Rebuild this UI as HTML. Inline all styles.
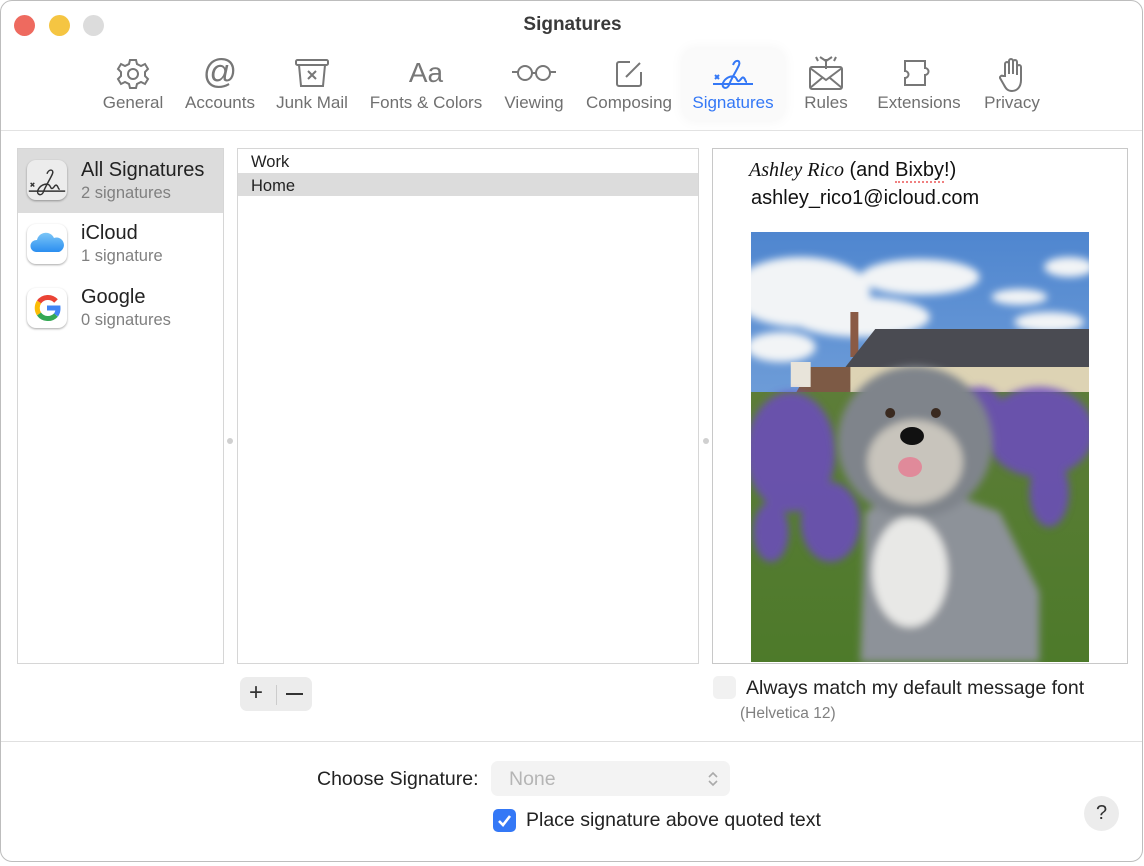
<!DOCTYPE html>
<html><head><meta charset="utf-8"><style>
*{margin:0;padding:0;box-sizing:border-box}
body{width:1144px;height:866px;background:#fff;font-family:"Liberation Sans",sans-serif;position:relative;overflow:hidden;color:#222}
.win{position:absolute;left:0;top:0;width:1143px;height:862px;border:1px solid #bdbdbd;border-radius:12px;background:#fff}
.a{position:absolute}
.dot{position:absolute;top:14px;width:21px;height:21px;border-radius:50%}
.tb{position:absolute;top:92px;font-size:17px;color:#707070;transform:translateX(-50%);white-space:nowrap}
.ic{position:absolute;top:56px;transform:translateX(-50%)}
.panel{position:absolute;border:1px solid #d6d6d6;background:#fff}
.t1{font-size:20px;color:#222}
.t2{font-size:16.5px;color:#808080}
.appic{position:absolute;left:9px;width:40px;height:40px;border-radius:9px;background:#fff;box-shadow:0 1px 2px rgba(0,0,0,.35)}
</style></head><body>
<div class="win">
<div class="dot" style="left:13px;background:#ee6a5f"></div>
<div class="dot" style="left:48px;background:#f5c542"></div>
<div class="dot" style="left:82px;background:#dcdcdc"></div>
<div class="a" style="left:0;width:1143px;top:13px;text-align:center;font-weight:bold;font-size:19px;color:#3a3a3a">Signatures</div>

<div class="a" style="left:682px;top:48px;width:101px;height:71px;background:#fafafa;border-radius:10px;box-shadow:0 0 14px rgba(0,0,0,.05)"></div>

<svg class="ic" style="left:132px" width="34" height="34" viewBox="0 0 34 34" fill="none" stroke="#777" stroke-width="2"><path d="M14 3h6l1 4 4 2 4-2 3 5-3 3v4l3 3-3 5-4-2-4 2-1 4h-6l-1-4-4-2-4 2-3-5 3-3v-4l-3-3 3-5 4 2 4-2z"/><circle cx="17" cy="17" r="5"/></svg>
<div class="ic" style="left:219px;top:52px;font-size:34px;color:#777">@</div>
<svg class="ic" style="left:311px" width="36" height="32" viewBox="0 0 36 32" fill="none" stroke="#777" stroke-width="2"><rect x="2" y="3" width="32" height="5" rx="1.5"/><path d="M5 8l2 21h22l2-21"/><path d="M14 14l8 8M22 14l-8 8"/></svg>
<div class="ic" style="left:425px;top:56px;font-size:28px;color:#777">Aa</div>
<svg class="ic" style="left:533px;top:62px" width="46" height="20" viewBox="0 0 46 20" fill="none" stroke="#777" stroke-width="2"><circle cx="14" cy="10" r="7"/><circle cx="32" cy="10" r="7"/><path d="M21 10h4M1 9h6M39 9h6"/></svg>
<svg class="ic" style="left:628px" width="32" height="32" viewBox="0 0 32 32" fill="none" stroke="#777" stroke-width="2"><path d="M17 5H6a2 2 0 0 0-2 2v20a2 2 0 0 0 2 2h20a2 2 0 0 0 2-2V15"/><path d="M13 20l14-14"/></svg>
<svg class="ic" style="left:732px" width="44" height="34" viewBox="0 0 44 34" fill="none" stroke="#3478f6" stroke-width="2"><path d="M4 18l4 4M8 18l-4 4"/><path d="M2 27h40"/><path d="M22 8c2-6 8-5 6 0s-8 14-10 20c-2 5-8 3-6-2s8-8 12-6c2 1 2 5 4 4s3-5 5-3 1 4 3 4"/></svg>
<svg class="ic" style="left:825px;top:54px" width="36" height="36" viewBox="0 0 36 36" fill="none" stroke="#777" stroke-width="2"><rect x="2" y="12" width="32" height="22" rx="2"/><path d="M2 13l16 12 16-12M2 33l12-10M34 33l-12-10"/><path d="M18 14V4M12 2l6 4 6-4M10 6l-2-4M26 6l2-4"/></svg>
<svg class="ic" style="left:918px" width="36" height="32" viewBox="0 0 36 32" fill="none" stroke="#777" stroke-width="2"><path d="M4 4h20v7a3 3 0 1 1 0 7v10H4v-7a3 3 0 1 0 0-7z"/></svg>
<svg class="ic" style="left:1011px;top:55px" width="28" height="36" viewBox="0 0 28 36" fill="none" stroke="#777" stroke-width="2"><path d="M7 20V8a2 2 0 0 1 4 0v10V5a2 2 0 0 1 4 0v13V6a2 2 0 0 1 4 0v13-8a2 2 0 0 1 4 0v13c0 7-4 11-9 11-4 0-6-2-8-6l-4-7a2 2 0 0 1 3-2z"/></svg>

<div class="tb" style="left:132px">General</div>
<div class="tb" style="left:219px">Accounts</div>
<div class="tb" style="left:311px">Junk Mail</div>
<div class="tb" style="left:425px">Fonts &amp; Colors</div>
<div class="tb" style="left:533px">Viewing</div>
<div class="tb" style="left:628px">Composing</div>
<div class="tb" style="left:732px;color:#3478f6">Signatures</div>
<div class="tb" style="left:825px">Rules</div>
<div class="tb" style="left:918px">Extensions</div>
<div class="tb" style="left:1011px">Privacy</div>
<div class="a" style="left:0;top:129px;width:1141px;height:1px;background:#e2e2e2"></div>

<div class="panel" style="left:16px;top:147px;width:207px;height:516px">
 <div class="a" style="left:0;top:0;width:205px;height:64px;background:#dcdcdc"></div>
 <div class="appic" style="top:11px;background:#ececec"><svg width="40" height="40" viewBox="0 0 44 34" style="margin-top:2px"><g fill="none" stroke="#333" stroke-width="1.6"><path d="M4 18l4 4M8 18l-4 4"/><path d="M2 27h40"/><path d="M22 8c2-6 8-5 6 0s-8 14-10 20c-2 5-8 3-6-2s8-8 12-6c2 1 2 5 4 4s3-5 5-3 1 4 3 4"/></g></svg></div>
 <div class="a t1" style="left:63px;top:10px">All Signatures</div>
 <div class="a t2" style="left:63px;top:35px">2 signatures</div>
 <div class="appic" style="top:75px"><svg width="40" height="40" viewBox="0 0 40 40"><defs><linearGradient id="cl" x1="0" y1="0" x2="0" y2="1"><stop offset="0" stop-color="#7cc6f7"/><stop offset="1" stop-color="#2b8ef0"/></linearGradient></defs><path d="M9 28a6 6 0 0 1 1-12 9 9 0 0 1 17-2 7 7 0 0 1 5 14z" fill="url(#cl)"/></svg></div>
 <div class="a t1" style="left:63px;top:73px">iCloud</div>
 <div class="a t2" style="left:63px;top:98px">1 signature</div>
 <div class="appic" style="top:139px"><svg width="40" height="40" viewBox="0 0 40 40"><g fill="none" stroke-width="5"><path d="M29 13a11 11 0 0 0-17 1" stroke="#ea4335"/><path d="M12 14a11 11 0 0 0 0 12" stroke="#fbbc05"/><path d="M12 26a11 11 0 0 0 17 1" stroke="#34a853"/><path d="M29 27a11 11 0 0 0 2-7H20" stroke="#4285f4"/></g></svg></div>
 <div class="a t1" style="left:63px;top:137px">Google</div>
 <div class="a t2" style="left:63px;top:162px">0 signatures</div>
</div>
<div class="a" style="left:226px;top:437px;width:6px;height:6px;border-radius:50%;background:#d0d0d0"></div>

<div class="panel" style="left:236px;top:147px;width:462px;height:516px">
 <div class="a" style="left:13px;top:4px;font-size:16.5px">Work</div>
 <div class="a" style="left:0;top:24px;width:460px;height:23px;background:#dcdcdc"></div>
 <div class="a" style="left:13px;top:28px;font-size:16.5px">Home</div>
</div>
<div class="a" style="left:702px;top:437px;width:6px;height:6px;border-radius:50%;background:#d0d0d0"></div>

<div class="panel" style="left:711px;top:147px;width:416px;height:516px;border-color:#c8c8c8;overflow:hidden">
 <div class="a" style="left:36px;top:10px;font-size:20px;color:#111;white-space:nowrap"><span style="font-family:'Liberation Serif',serif;font-style:italic">Ashley Rico</span> (and <span style="border-bottom:2px dotted #f08080">Bixby</span>!)</div>
 <div class="a" style="left:38px;top:38px;font-size:20px;color:#111">ashley_rico1@icloud.com</div>
 <svg class="a" style="left:38px;top:83px" width="338" height="430" viewBox="0 0 340 430" preserveAspectRatio="none">
  <defs><linearGradient id="sky" x1="0" y1="0" x2="0" y2="1"><stop offset="0" stop-color="#4f86cf"/><stop offset="1" stop-color="#9fc0e6"/></linearGradient>
  <linearGradient id="gr" x1="0" y1="0" x2="0" y2="1"><stop offset="0" stop-color="#5d7d38"/><stop offset="1" stop-color="#4d7a2a"/></linearGradient>
  <filter id="bl"><feGaussianBlur stdDeviation="4"/></filter></defs>
  <rect width="340" height="430" fill="url(#sky)"/>
  <g fill="#f2f4f6" filter="url(#bl)"><ellipse cx="50" cy="60" rx="70" ry="35"/><ellipse cx="170" cy="45" rx="60" ry="18"/><ellipse cx="110" cy="85" rx="70" ry="20"/><ellipse cx="320" cy="35" rx="25" ry="10"/><ellipse cx="270" cy="65" rx="28" ry="8"/><ellipse cx="300" cy="90" rx="35" ry="10"/><ellipse cx="30" cy="115" rx="35" ry="15"/></g>
  <rect x="100" y="80" width="8" height="45" fill="#8a5a45"/>
  <path d="M95 135l30-38h215v38z" fill="#4a4b52"/>
  <rect x="95" y="135" width="245" height="40" fill="#ddd3b4"/>
  <path d="M40 170l20-35h40v40z" fill="#7d5a45"/>
  <rect x="40" y="130" width="20" height="25" fill="#e8e4da"/>
  <rect y="160" width="340" height="270" fill="url(#gr)"/>
  <g fill="#6c4cc0" opacity=".85" filter="url(#bl)"><ellipse cx="40" cy="220" rx="45" ry="60"/><ellipse cx="80" cy="290" rx="30" ry="40"/><ellipse cx="290" cy="200" rx="55" ry="45"/><ellipse cx="300" cy="260" rx="20" ry="35"/><ellipse cx="230" cy="180" rx="25" ry="25"/><ellipse cx="20" cy="300" rx="18" ry="30"/></g>
  <g filter="url(#bl)">
  <path d="M110 430l5-150 55-30 80 30 40 80 0 70z" fill="#8d9299"/>
  <ellipse cx="160" cy="340" rx="38" ry="55" fill="#e8e8e6"/>
  <ellipse cx="165" cy="210" rx="78" ry="76" fill="#7f848b"/>
  <ellipse cx="165" cy="230" rx="48" ry="42" fill="#c8c4bc"/>
  </g>
  <circle cx="140" cy="181" r="5" fill="#3a2a20"/><circle cx="186" cy="181" r="5" fill="#3a2a20"/>
  <ellipse cx="162" cy="204" rx="12" ry="9" fill="#111"/>
  <ellipse cx="160" cy="235" rx="12" ry="10" fill="#e08a9a"/>
 </svg>
</div>

<div class="a" style="left:239px;top:676px;width:72px;height:34px;border-radius:7px;background:#ececec"></div>
<div class="a" style="left:248px;top:678px;font-size:24px;color:#333">+</div>
<div class="a" style="left:275px;top:684px;width:1px;height:20px;background:#ccc"></div>
<div class="a" style="left:285px;top:692px;width:17px;height:2px;background:#333"></div>

<div class="a" style="left:712px;top:675px;width:23px;height:23px;border-radius:5px;background:#f1f1f1"></div>
<div class="a" style="left:745px;top:676px;font-size:19.5px;color:#222">Always match my default message font</div>
<div class="a" style="left:739px;top:704px;font-size:15.5px;color:#808080">(Helvetica 12)</div>

<div class="a" style="left:0;top:740px;width:1141px;height:1px;background:#e0e0e0"></div>
<div class="a" style="left:316px;top:767px;font-size:19.5px;color:#222">Choose Signature:</div>
<div class="a" style="left:490px;top:760px;width:239px;height:35px;border-radius:7px;background:#f3f3f3"></div>
<div class="a" style="left:508px;top:767px;font-size:19.5px;color:#b5b5b5">None</div>
<svg class="a" style="left:705px;top:769px" width="14" height="18" viewBox="0 0 14 18" fill="none" stroke="#aaa" stroke-width="1.6"><path d="M3 7l4-4 4 4M3 11l4 4 4-4"/></svg>
<div class="a" style="left:492px;top:808px;width:23px;height:23px;border-radius:5px;background:#3478f6"></div>
<svg class="a" style="left:492px;top:808px" width="23" height="23" viewBox="0 0 23 23" fill="none" stroke="#fff" stroke-width="2.6"><path d="M6 12l4 4 7-9"/></svg>
<div class="a" style="left:525px;top:808px;font-size:19.5px;color:#222">Place signature above quoted text</div>
<div class="a" style="left:1083px;top:795px;width:35px;height:35px;border-radius:50%;background:#ececec;text-align:center;line-height:35px;font-size:20px;color:#333">?</div>
</div>
</body></html>
